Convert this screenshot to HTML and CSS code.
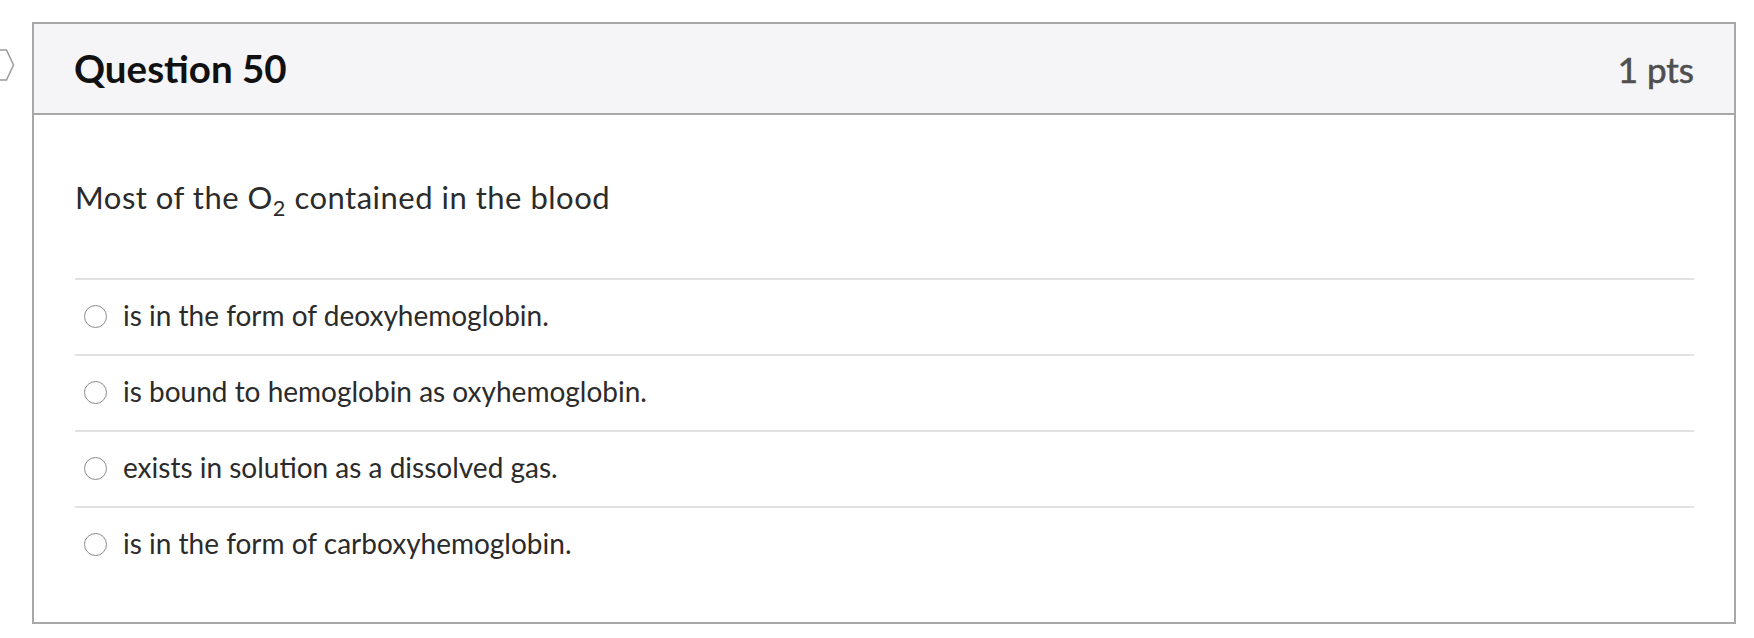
FILE: index.html
```html
<!DOCTYPE html>
<html lang="en">
<head>
<meta charset="utf-8">
<title>Question 50</title>
<link rel="stylesheet" href="styles.css">
</head>
<body>
<div class="page">
  <div class="gutter">
    <svg class="flag" width="16" height="34" viewBox="0 0 16 34" aria-hidden="true">
      <path d="M0 1 L6.5 1 L13.5 16 L6.5 31 L0 31" fill="none" stroke="#9a9a9a" stroke-width="1.5" stroke-linejoin="miter"/>
    </svg>
  </div>
  <div class="question">
    <div class="q-header">
      <h2 class="q-title">Question 50</h2>
      <span class="q-points">1 pts</span>
    </div>
    <div class="q-body">
      <p class="q-text">Most of the O<sub>2</sub> contained in the blood</p>
      <ul class="answers">
        <li class="answer"><span class="radio"></span><span class="label">is in the form of deoxyhemoglobin.</span></li>
        <li class="answer"><span class="radio"></span><span class="label">is bound to hemoglobin as oxyhemoglobin.</span></li>
        <li class="answer"><span class="radio"></span><span class="label">exists in solution as a dissolved gas.</span></li>
        <li class="answer"><span class="radio"></span><span class="label">is in the form of carboxyhemoglobin.</span></li>
      </ul>
    </div>
  </div>
</div>
</body>
</html>
```

FILE: styles.css
```css
html, body {
  margin: 0;
  padding: 0;
  background: #ffffff;
}

body {
  font-family: Lato, "Open Sans", "Liberation Sans", sans-serif;
  color: #2d2d2d;
}

.page {
  display: flex;
  align-items: flex-start;
  padding-top: 22px;
}

.gutter {
  width: 32px;
  flex: 0 0 32px;
  padding-top: 27px;
}

.flag {
  display: block;
}

.question {
  width: 1704px;
  height: 602px;
  box-sizing: border-box;
  border: 2px solid #a8a8a8;
  display: flex;
  flex-direction: column;
}

.q-header {
  height: 89px;
  background: #f5f5f7;
  border-bottom: 2px solid #a8a8a8;
  display: flex;
  align-items: center;
  justify-content: space-between;
  padding: 0 40px 0 40px;
}

.q-title {
  margin: 0;
  font-size: 38.5px;
  font-weight: 700;
  line-height: 1.2;
  color: #111111;
}

.q-points {
  font-size: 35px;
  font-weight: 400;
  line-height: 1.2;
  color: #4f4f4f;
  -webkit-text-stroke: 0.6px #4f4f4f;
}

.q-body {
  padding: 64px 40px 0 41px;
}

.q-text {
  margin: 0 0 62px 0;
  font-size: 31px;
  letter-spacing: 0.5px;
  line-height: 1.2;
  color: #2b2b2b;
}

.q-text sub {
  font-size: 0.7em;
  line-height: 0;
}

.answers {
  list-style: none;
  margin: 0;
  padding: 0;
}

.answer {
  height: 72px;
  border-top: 2px solid #e2e2e2;
  display: flex;
  align-items: center;
  padding-bottom: 2px;
  box-sizing: content-box;
}

.radio {
  width: 21px;
  height: 21px;
  border: 1.5px solid #8c8c8c;
  border-radius: 50%;
  background: #ffffff;
  margin-left: 9px;
  margin-right: 16px;
  flex: 0 0 auto;
}

.label {
  font-size: 28px;
  line-height: 1.2;
  color: #2b2b2b;
}
```
